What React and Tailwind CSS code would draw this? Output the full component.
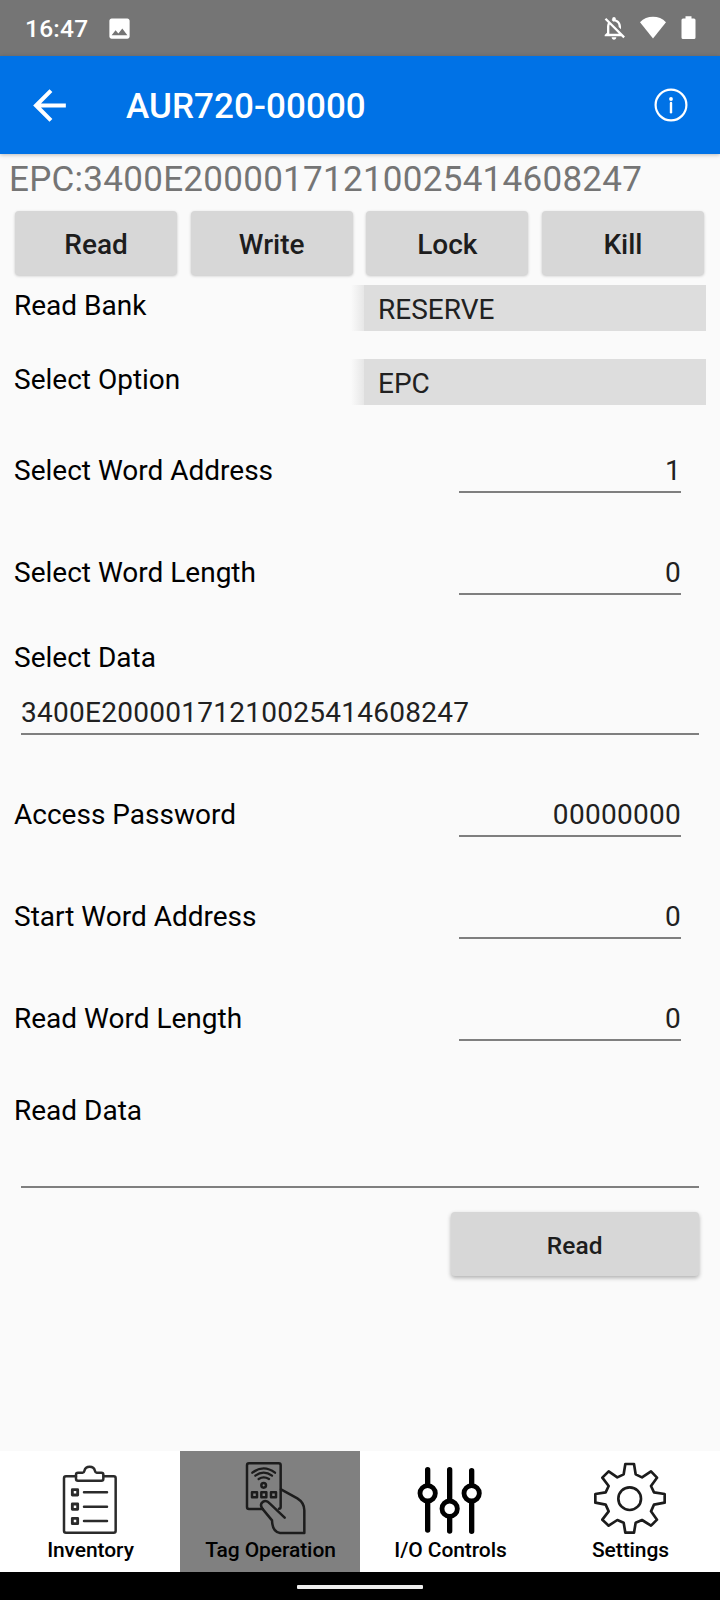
import { MdArrowBack, MdImage, MdOutlineNotificationsOff } from "react-icons/md";

function StatusBar() {
  return (
    <div className="flex h-14 shrink-0 items-center bg-[#757575] text-white">
      <span className="ml-[25px] w-[80.5px] pt-px text-[24.5px] leading-[29px] font-medium tracking-[0.25px]">16:47</span>
      <MdImage className="size-[27px]" />
      <div className="mr-6 ml-auto flex items-center">
        <MdOutlineNotificationsOff className="mr-3 size-7" />
        <svg className="h-6 w-[26px]" viewBox="0 0 26 24">
          <path d="M13 22.500 0 6.300C3.500 2.500 8 0.800 13 0.800S22.500 2.500 26 6.300Z" fill="#fff" />
        </svg>
        <svg className="ml-[15px] h-6 w-[15px]" viewBox="0 0 15 24">
          <path d="M4.500 0.300h6V2.500H13a1.500 1.500 0 0 1 1.500 1.500v17.500a1.500 1.500 0 0 1-1.500 1.500H2a1.500 1.500 0 0 1-1.500-1.500V4A1.500 1.500 0 0 1 2 2.500h2.500Z" fill="#fff" />
        </svg>
      </div>
    </div>
  );
}

function AppBar() {
  return (
    <header className="z-10 flex h-[98px] shrink-0 items-center bg-[#0072e6] text-white shadow-[0_1px_4px_rgba(0,0,0,0.25)]">
      <MdArrowBack className="ml-[24.5px] size-[49px]" />
      <h1 className="ml-[52.5px] pt-[2px] text-[35px] leading-[41px] font-medium tracking-[0.08px]">AUR720-00000</h1>
      <svg className="mr-[31px] ml-auto size-9" viewBox="0 0 36 36" fill="none" stroke="#fff">
        <circle cx="18" cy="18" r="15.400" strokeWidth="2.200" />
        <path d="M18 16v9.200" strokeWidth="2.400" strokeLinecap="round" />
        <circle cx="18" cy="12" r="1.900" fill="#fff" stroke="none" />
      </svg>
    </header>
  );
}

function Button({ children, className }) {
  return (
    <button
      className={
        "flex items-center justify-center rounded-[4px] bg-[#d7d7d7] pt-[3px] font-medium text-[#1d1d1d] " +
        className
      }
    >
      {children}
    </button>
  );
}

function SelectRow({ label, value, className }) {
  return (
    <div className={"flex h-[46px] pr-3.5 pl-3.5 " + className}>
      <span className="w-[337px] pt-1">{label}</span>
      <div className="w-[13px] bg-linear-to-r from-[#fafafa] to-[#e7e7e7]" />
      <div className="flex-1 bg-[#ddd] pt-2 pl-3.5 text-[#212121]">{value}</div>
    </div>
  );
}

function FieldRow({ label, value, className }) {
  return (
    <div className={"flex h-[39px] justify-between pr-[39px] pl-3.5 " + className}>
      <span>{label}</span>
      <div className="w-[222px] border-b-2 border-[#7f7f7f] text-right tracking-[0.28px] text-[#212121]">{value}</div>
    </div>
  );
}

function WideField({ label, value, className }) {
  return (
    <div className={className}>
      <div className="pl-3.5">{label}</div>
      <div className="mx-[21px] mt-[22px] h-[39px] border-b-2 border-[#7f7f7f] tracking-[0.27px] text-[#212121]">
        {value}
      </div>
    </div>
  );
}

function InventoryIcon() {
  return (
    <g stroke="#2b2b2b" strokeWidth="7.500" strokeLinejoin="round" strokeLinecap="round">
      <path d="M228 109h-30q-6 0-6 6v157q0 6 6 6h143q6 0 6-6V115q0-6-6-6h-30" />
      <path d="M234 98h14q4 0 5-5a16.500 16.500 0 0 1 32 0q1 5 5 5h14q6 0 6 6v12q0 6-6 6h-70q-6 0-6-6v-12q0-6 6-6Z" />
      <path d="M217 149h16v16h-16zM217 192h16v16h-16zM217 235h16v16h-16z" strokeWidth="8.500" />
      <path d="M252 157h69M252 200h69M252 243h69" />
    </g>
  );
}

function TagIcon() {
  return (
    <g stroke="#1c1c1c" strokeWidth="7.500" strokeLinejoin="round" strokeLinecap="round">
      <path d="M248 207h-41q-6 0-6-6V76q0-6 6-6h89q6 0 6 6v125q0 5-5 5" />
      <path d="M217 98q34-26 68 0M226 107q25-18 50 0M236 117q15-10 31 0" strokeWidth="7" />
      <circle cx="251" cy="136" r="7" />
      <path d="M216 157h15v15h-15zM244 157h15v15h-15zM273 157h15v15h-15z" />
      <path d="M303 148l49 27q21 13 21 36v68h-73q-23-3-24-38l-29-35c-12-18 9-31 22-16l45 43" />
    </g>
  );
}

function ControlsIcon() {
  return (
    <g stroke="#000" strokeWidth="16" strokeLinecap="round">
      <path d="M203 89v47M203 186v84M269 89v91M269 232v41M335 92v44M335 186v88" />
      <circle cx="203" cy="160" r="23" strokeWidth="14.500" />
      <circle cx="269" cy="206" r="23" strokeWidth="14.500" />
      <circle cx="335" cy="160" r="23" strokeWidth="14.500" />
    </g>
  );
}

function SettingsIcon() {
  return (
    <g stroke="#1c1c1c" strokeWidth="8" strokeLinejoin="round">
      <path d="M256 72H282L287 103L306 112L333 94L351 113L333 138L342 157L374 162V188L342 194L333 214L351 239L333 257L306 240L287 248L282 278H256L251 248L232 240L206 257L187 239L206 214L197 194L166 188V162L197 157L206 138L187 113L206 94L232 112L251 103Z" />
      <circle cx="269" cy="176" r="34" />
    </g>
  );
}

const tabs = [
  { label: "Inventory", Icon: InventoryIcon },
  { label: "Tag Operation", Icon: TagIcon, active: true },
  { label: "I/O Controls", Icon: ControlsIcon },
  { label: "Settings", Icon: SettingsIcon },
];

function BottomNav() {
  return (
    <nav className="grid h-[121px] shrink-0 grid-cols-4 bg-white text-[21px] leading-6 font-medium tracking-[-0.08px] text-black">
      {tabs.map(({ label, Icon, active }) => (
        <div key={label} className={"flex flex-col items-center pt-[9px] " + (active ? "bg-[#808080]" : "")}>
          <svg className="h-[75px] w-20" viewBox="150 60 240 225" fill="none">
            <Icon />
          </svg>
          <span className="mt-[3px] pl-px">{label}</span>
        </div>
      ))}
    </nav>
  );
}

export default function App() {
  return (
    <div className="flex h-[1600px] w-[720px] flex-col overflow-hidden bg-[#fafafa] font-['Roboto',sans-serif]">
      <StatusBar />
      <AppBar />
      <main className="flex-1 pt-[5px] text-[28px] leading-[33px] text-black">
        <p className="pl-[9px] text-[35px] leading-[42px] tracking-[0.28px] text-[#757575]">
          EPC:3400E20000171210025414608247
        </p>
        <div className="mr-[16px] ml-[15px] grid grid-cols-4 gap-[13.500px] pt-[9.500px]">
          {["Read", "Write", "Lock", "Kill"].map((name) => (
            <Button key={name} className="h-[64.5px] shadow-[0_1px_3px_rgba(0,0,0,0.22)]">
              {name}
            </Button>
          ))}
        </div>
        <SelectRow label="Read Bank" value="RESERVE" className="mt-[10px]" />
        <SelectRow label="Select Option" value="EPC" className="mt-7" />
        <FieldRow label="Select Word Address" value="1" className="mt-[49px]" />
        <FieldRow label="Select Word Length" value="0" className="mt-[63px]" />
        <WideField label="Select Data" value="3400E20000171210025414608247" className="mt-[46px]" />
        <FieldRow label="Access Password" value="00000000" className="mt-[63px]" />
        <FieldRow label="Start Word Address" value="0" className="mt-[63px]" />
        <FieldRow label="Read Word Length" value="0" className="mt-[63px]" />
        <WideField label="Read Data" value="" className="mt-[53px]" />
        <Button className="mt-6 ml-[450.5px] h-16 w-[248.5px] text-[24.5px] tracking-[0.1px] shadow-[0_2px_4px_rgba(0,0,0,0.3)]">
          Read
        </Button>
      </main>
      <BottomNav />
      <div className="flex h-7 shrink-0 justify-center bg-black pt-[13px]">
        <div className="h-1 w-[126px] rounded-[1px] bg-[#eee]" />
      </div>
    </div>
  );
}
